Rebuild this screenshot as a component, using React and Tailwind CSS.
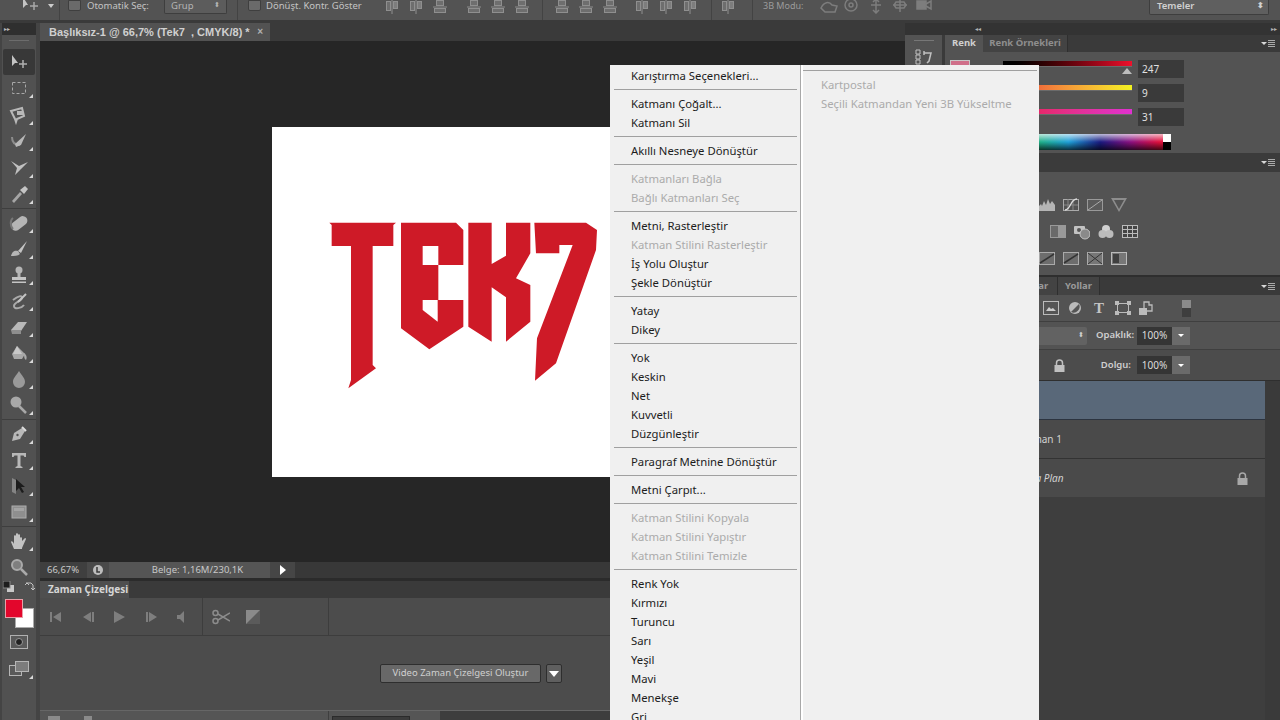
import { Fragment } from "react";

const MENU = [
  [["Karıştırma Seçenekleri..."]],
  [["Katmanı Çoğalt..."], ["Katmanı Sil"]],
  [["Akıllı Nesneye Dönüştür"]],
  [["Katmanları Bağla", true], ["Bağlı Katmanları Seç", true]],
  [["Metni, Rasterleştir"], ["Katman Stilini Rasterleştir", true], ["İş Yolu Oluştur"], ["Şekle Dönüştür"]],
  [["Yatay"], ["Dikey"]],
  [["Yok"], ["Keskin"], ["Net"], ["Kuvvetli"], ["Düzgünleştir"]],
  [["Paragraf Metnine Dönüştür"]],
  [["Metni Çarpıt..."]],
  [["Katman Stilini Kopyala", true], ["Katman Stilini Yapıştır", true], ["Katman Stilini Temizle", true]],
  [["Renk Yok"], ["Kırmızı"], ["Turuncu"], ["Sarı"], ["Yeşil"], ["Mavi"], ["Menekşe"], ["Gri"]],
];

// tool glyphs, drawn on a 20x20 box
const TOOL_GROUPS = [
  [
    <><path d="M3 3v11l3-3 3 0z" fill="#c4c4c4" /><path d="M14 8v8M10 12h8" stroke="#b0b0b0" strokeWidth="1.5" /></>,
    <rect x="3.5" y="4.5" width="13" height="11" fill="none" stroke="#a8a8a8" strokeDasharray="3 2" />,
    <><path d="M2 6l11-3 2 8-7 3-1 3-1-3z" fill="none" stroke="#b8b8b8" strokeWidth="2" /><rect x="8" y="6" width="6" height="4" fill="#b8b8b8" /></>,
    <><path d="M3 6c0 6 3 8 8 8" fill="none" stroke="#8c8c8c" strokeWidth="2" /><path d="M6 13l11-10-5 11-5 2z" fill="#b8b8b8" /></>,
    <><path d="M2 3l8 5 9-4-7 7-6 6 2-7z" fill="#c0c0c0" /></>,
    <><path d="M3 17l8-9 2 2-8 9z" fill="#a5a5a5" /><path d="M11 6l5-4 3 3-4 5z" fill="#c4c4c4" /></>,
  ],
  [
    <><rect x="1" y="6" width="18" height="9" rx="4.5" transform="rotate(-38 10 10)" fill="#b5b5b5" /><path d="M4 5c-3 2-3 8 0 11" fill="none" stroke="#777" strokeWidth="2" /></>,
    <><path d="M9 12L18 2l-6 12z" fill="#c4c4c4" /><path d="M2 17c1-5 4-6 7-5l2 3c-2 2-6 2-9 2z" fill="#b5b5b5" /></>,
    <><circle cx="10" cy="5" r="3.5" fill="#b5b5b5" /><rect x="8.5" y="7" width="3" height="5" fill="#b5b5b5" /><rect x="3" y="12" width="14" height="3" fill="#c4c4c4" /><rect x="3" y="16.5" width="14" height="1.5" fill="#c4c4c4" /></>,
    <><path d="M4 9c5-4 9-5 9-2s-8 4-8 8 8 2 10-1" fill="none" stroke="#aaa" strokeWidth="2" /><path d="M9 11l8-8" stroke="#c4c4c4" strokeWidth="2" /></>,
    <><path d="M2 13L9 5h9l-6 9H3z" fill="#b8b8b8" /><path d="M2 13h10v4H3z" fill="#8e8e8e" /></>,
    <><path d="M8 3l8 8-3 5H5l-2-5z" fill="#a8a8a8" /><path d="M8 3l-4 8h9z" fill="#c8c8c8" /><path d="M15 10c3 2 3 5 2 7-2-1-2-4-2-7z" fill="#aaa" /></>,
    <path d="M10 2c3 5 6 7 6 11a6 6 0 0 1-12 0c0-4 3-6 6-11z" fill="#9a9a9a" />,
    <><circle cx="7" cy="7" r="5.5" fill="#a8a8a8" /><path d="M10 11l7 7" stroke="#a8a8a8" strokeWidth="2.5" /></>,
  ],
  [
    <><path d="M3 17l2-8 8-5 3 3-5 8z" fill="#b8b8b8" /><path d="M13 3l4 4" stroke="#ddd" strokeWidth="2" /><circle cx="8.5" cy="11" r="1.2" fill="#555" /></>,
    <path d="M3 3h14v4h-1.5l-1-1.5H11.5V16l2 1v1h-7v-1l2-1V5.5H5.500l-1 1.500H3z" fill="#b8b8b8" />,
    <><path d="M3 2v14l4 2V4z" fill="#858585" /><path d="M7 3v12l3-3 3 5 2-1-3-5h4z" fill="#1c1c1c" /></>,
    <><rect x="3" y="4" width="14" height="12" fill="#8f8f8f" stroke="#adadad" /><rect x="5" y="6" width="10" height="3" fill="#a4a4a4" /></>,
  ],
  [
    <path d="M5 18l-3-7c0-1 1-1 2 0l1 2V5c0-1 2-1 2 0v4-6c0-1 2-1 2 0v6-5c0-1 2-1 2 0v6-3c0-1 2-1 2 0v3l3-3c1 0 1 1 1 1l-4 9v1z" fill="#c2c2c2" />,
    <><circle cx="8" cy="8" r="5" fill="#7f7f7f" stroke="#aaa" strokeWidth="2" /><path d="M12 12l6 6" stroke="#aaa" strokeWidth="2.500" /></>,
  ],
];

function Tool({ children, active, corner = true }) {
  return (
    <div className={`relative flex h-[26px] items-center justify-center ${active ? "mx-[1px] rounded-[2px] bg-[#383838]" : ""}`}>
      <svg width="20" height="20" viewBox="0 0 20 20">{children}</svg>
      {corner && <span className="absolute bottom-[3px] right-[3px] h-0 w-0 border-b-[4px] border-l-[4px] border-b-[#d8d8d8] border-l-transparent" />}
    </div>
  );
}

function Toolbar() {
  return (
    <div className="flex w-[40px] shrink-0 bg-[#444444]">
      <div className="ml-[2px] flex w-[34px] flex-col bg-[#515151]">
        <div className="flex h-[12px] items-center bg-[#2f2f2f] pl-[2px] text-[6px] leading-none text-[#bbbbbb]">▸▸</div>
        <div className="flex h-[14px] items-start justify-center pt-[5px]">
          <span className="h-[1px] w-[20px] bg-[#6c6c6c]" />
        </div>
        <div className="flex flex-col gap-[0.4px]">
          {TOOL_GROUPS[0].map((g, i) => <Tool key={i} active={i === 0} corner={i !== 0}>{g}</Tool>)}
        </div>
        <div className="my-[1px] h-[1px] bg-[#3e3e3e]" />
        {TOOL_GROUPS[1].map((g, i) => <Tool key={i}>{g}</Tool>)}
        <div className="my-[1px] h-[1px] bg-[#3e3e3e]" />
        {TOOL_GROUPS[2].map((g, i) => <Tool key={i}>{g}</Tool>)}
        <div className="my-[1px] h-[1px] bg-[#3e3e3e]" />
        {TOOL_GROUPS[3].map((g, i) => <Tool key={i} corner={i === 0}>{g}</Tool>)}

        {/* swatches */}
        <div className="flex h-[14px] items-center justify-between px-[1px]">
          <svg width="11" height="11" viewBox="0 0 11 11"><rect x="4" y="4" width="7" height="7" fill="#c8c8c8" /><rect x="0" y="0" width="7" height="7" fill="#1d1d1d" stroke="#888" /></svg>
          <svg width="11" height="11" viewBox="0 0 11 11"><path d="M2 2h5l2 2v5M1 4l2-2 2 2M7 7l2 2 2-2" fill="none" stroke="#c4c4c4" /></svg>
        </div>
        <div className="h-[35px] pl-[3px] pt-[5px]">
          <div className="relative h-[29px] w-[29px]">
            <div className="absolute bottom-0 right-0 h-[20px] w-[19px] border border-[#aaaaaa] bg-white" />
            <div className="absolute left-0 top-0 h-[19px] w-[18px] border border-[#e8a0a8] bg-[#e3062c]" />
          </div>
        </div>
        <div className="flex h-[26px] items-center justify-center">
          <svg width="18" height="14" viewBox="0 0 18 14"><rect x="0.500" y="0.500" width="17" height="13" fill="#5a5a5a" stroke="#b0b0b0" /><circle cx="9" cy="7" r="3.500" fill="#222" stroke="#999" /></svg>
        </div>
        <div className="relative mt-[1px] flex h-[26px] items-center justify-center">
          <svg width="20" height="16" viewBox="0 0 20 16"><rect x="0.500" y="4.500" width="12" height="10" fill="#5a5a5a" stroke="#b5b5b5" /><rect x="6.500" y="0.500" width="13" height="10" fill="#7c7c7c" stroke="#b5b5b5" /></svg>
          <span className="absolute bottom-[3px] right-[3px] h-0 w-0 border-b-[4px] border-l-[4px] border-b-[#d8d8d8] border-l-transparent" />
        </div>
      </div>
    </div>
  );
}

function Align({ horizontal }) {
  return (
    <svg width="16" height="14" viewBox="0 0 16 14" className="shrink-0">
      {horizontal ? (
        <><path d="M1 7h14" stroke="#8f8f8f" /><rect x="4.500" y="0.500" width="7" height="5" fill="#6e6e6e" stroke="#8f8f8f" /><rect x="2.500" y="8.500" width="11" height="4" fill="#6e6e6e" stroke="#8f8f8f" /></>
      ) : (
        <><path d="M8 0v14" stroke="#8f8f8f" /><rect x="2.500" y="1.500" width="4" height="9" fill="#6e6e6e" stroke="#8f8f8f" /><rect x="9.500" y="1.500" width="4" height="7" fill="#7d7d7d" stroke="#8f8f8f" /></>
      )}
    </svg>
  );
}

function TopDivider({ className }) {
  return <span className={`h-[20px] w-[1px] shrink-0 bg-[#434343] ${className}`} />;
}

function TopBar() {
  return (
    <div className="flex h-[20px] items-start overflow-hidden bg-[#535353] text-[9.5px] leading-[11px] text-[#c4c4c4]">
      <svg width="18" height="12" viewBox="0 0 18 12" className="ml-[22px] shrink-0"><path d="M1 -3v11l3-3 2 0z" fill="#c4c4c4" /><path d="M12 2v8M8 6h8" stroke="#a8a8a8" strokeWidth="1.500" /></svg>
      <span className="ml-[8px] mt-[4px] h-0 w-0 shrink-0 border-x-[3px] border-t-[4px] border-x-transparent border-t-[#cccccc]" />
      <TopDivider className="ml-[5px]" />
      <span className="ml-[8px] h-[11px] w-[13px] shrink-0 rounded-b-[2px] border border-[#3f3f3f] bg-[#6a6a6a]" />
      <span className="ml-[6px] w-[70px] shrink-0 whitespace-nowrap">Otomatik Seç:</span>
      <div className="ml-[7px] flex h-[14px] w-[63px] shrink-0 items-start justify-between rounded-b-[2px] border-x border-b border-[#3e3e3e] bg-[#5c5c5c] px-[6px] text-[#b5b5b5]">
        <span>Grup</span>
        <span className="text-[7px] leading-[10px]">⬍</span>
      </div>
      <TopDivider className="ml-[10px]" />
      <span className="ml-[10px] h-[11px] w-[13px] shrink-0 rounded-b-[2px] border border-[#3f3f3f] bg-[#6a6a6a]" />
      <span className="ml-[5px] w-[118px] shrink-0 whitespace-nowrap">Dönüşt. Kontr. Göster</span>
      <div className="flex shrink-0 gap-[8px]"><Align /><Align /><Align horizontal /></div>
      <div className="ml-[18px] flex shrink-0 gap-[8px]"><Align horizontal /><Align horizontal /><Align horizontal /></div>
      <TopDivider className="ml-[12px]" />
      <div className="ml-[11px] flex shrink-0 gap-[8px]"><Align horizontal /><Align horizontal /><Align horizontal /></div>
      <div className="ml-[16px] flex shrink-0 gap-[8px]"><Align /><Align /><Align /></div>
      <TopDivider className="ml-[13px]" />
      <div className="ml-[8px] shrink-0"><Align /></div>
      <TopDivider className="ml-[16px]" />
      <span className="ml-[10px] w-[57px] shrink-0 whitespace-nowrap text-[9px] text-[#9c9c9c]">3B Modu:</span>
      <svg width="112" height="14" viewBox="0 0 112 14" fill="none" stroke="#7d7d7d" strokeWidth="1.500" className="shrink-0">
        <path d="M1 8c3-6 8-7 11-3l5 1-2 6H5z" />
        <circle cx="31" cy="5" r="6" /><circle cx="31" cy="5" r="2" />
        <path d="M56 0v12M51 5h10M53 2l3-3 3 3M53 10l3 3 3-3" />
        <path d="M73 5h14M80 0v12M76 2h8l2 3-2 3h-8l-2-3z" />
        <rect x="97" y="1" width="9" height="8" fill="#7d7d7d" /><path d="M106 4l5-3v8l-5-3" />
      </svg>
      <div className="ml-[217px] flex h-[15px] w-[120px] shrink-0 items-start justify-between rounded-b-[2px] border-x border-b border-[#3e3e3e] bg-[#5f5f5f] pl-[7px] pr-[4px] font-semibold text-[#d0d0d0]">
        <span>Temeler</span>
        <span className="text-[8px] leading-[10px]">⬍</span>
      </div>
    </div>
  );
}

function Logo() {
  return (
    <svg width="290" height="190" viewBox="0 0 870 570" aria-label="Tek7 logo" fill="#ce1a27">
      <polygon points="25,38 225,38 217,45 217,108 155,108 155,465 165,475 82,535 90,510 90,108 32,108 32,45" />
      <polygon points="240,38 405,38 427,60 427,165 352,165 352,270 427,270 427,350 325,418 240,355" />
      <rect x="305" y="108" width="47" height="57" fill="#ffffff" />
      <polygon points="305,270 350,270 350,335 305,300" fill="#ffffff" />
      <polygon points="442,38 512,38 512,162 555,137 555,38 628,38 628,130 585,205 628,225 628,335 555,395 555,262 512,232 512,395 442,350" />
      <polygon points="640,38 795,38 828,60 825,120 705,460 642,512 648,385 755,105 715,105 715,130 645,130" />
    </svg>
  );
}

function Timeline() {
  return (
    <div className="flex h-[139px] flex-col bg-[#4c4c4c]">
      <div className="flex h-[17px] shrink-0 bg-[#3a3a3a]">
        <div className="flex w-[89px] items-center whitespace-nowrap bg-[#4f4f4f] pl-[8px] text-[10px] font-bold text-[#d6d6d6]">Zaman Çizelgesi</div>
      </div>
      <div className="flex h-[38px] shrink-0 border-b border-[#3d3d3d]">
        <div className="flex w-[163px] items-center border-r border-[#3d3d3d] pl-[9px]">
          <svg width="140" height="14" viewBox="0 0 140 14" fill="#7e7e7e">
            <path d="M1 2h2v10H1zM12 2v10L4 7z" />
            <path d="M34 7l8-5v10zM43 2h2v10h-2z" />
            <path d="M65 1l11 6-11 6z" />
            <path d="M97 2h2v10h-2zM100 2l8 5-8 5z" />
            <path d="M128 5h3l4-4v12l-4-4h-3z" />
          </svg>
        </div>
        <div className="flex w-[126px] items-center gap-[16px] border-r border-[#3d3d3d] pl-[9px]">
          <svg width="18" height="16" viewBox="0 0 18 16" fill="none" stroke="#8c8c8c" strokeWidth="1.500"><circle cx="3.500" cy="4" r="2.500" /><circle cx="3.500" cy="12" r="2.500" /><path d="M6 5l12 7M6 11l12-7" /></svg>
          <svg width="14" height="14" viewBox="0 0 14 14"><rect width="14" height="14" fill="#8a8a8a" /><path d="M14 0v14H0z" fill="#5b5b5b" /></svg>
        </div>
      </div>
      <div className="flex flex-1 items-start pl-[340px] pt-[28px]">
        <button className="flex h-[19px] w-[161px] items-center justify-center rounded-[2px] border border-[#2e2e2e] bg-[#686868] text-[9.5px] text-[#d0d0d0]">Video Zaman Çizelgesi Oluştur</button>
        <button className="ml-[5px] flex h-[19px] w-[16px] items-center justify-center rounded-[2px] border border-[#2e2e2e] bg-[#5f5f5f]">
          <span className="h-0 w-0 border-x-[5px] border-t-[6px] border-x-transparent border-t-white" />
        </button>
      </div>
      <div className="flex h-[10px] shrink-0 border-t border-[#666666]">
        <div className="flex w-[400px] bg-[#555555]">
          <div className="flex w-[289px] items-start gap-[24px] border-r border-[#3f3f3f] pl-[8px] pt-[5px]">
            <span className="h-[4px] w-[12px] bg-[#8a8a8a]" />
            <span className="h-[4px] w-[8px] bg-[#8a8a8a]" />
          </div>
          <span className="ml-[3px] mt-[5px] h-[5px] w-[78px] border border-[#2b2b2b] bg-[#3c3c3c]" />
        </div>
        <div className="flex-1 bg-[#3d3d3d]" />
      </div>
    </div>
  );
}

function DocArea() {
  return (
    <div className="flex min-w-0 flex-1 flex-col bg-[#262626]">
      <div className="flex h-[18px] shrink-0 bg-[#3a3a3a]">
        <div className="flex w-[230px] items-center justify-between bg-[#525252] pl-[9px] pr-[7px] font-['Liberation_Sans',sans-serif] text-[11px] font-bold text-[#d0d0d0]">
          <span className="whitespace-pre">Başlıksız-1 @ 66,7% (Tek7  , CMYK/8) *</span>
          <span className="text-[10px] leading-none text-[#b0b0b0]">×</span>
        </div>
      </div>
      <div className="flex flex-1 items-center justify-center">
        <div className="h-[350px] w-[402px] shrink-0 bg-white pl-[49px] pt-[83px]">
          <Logo />
        </div>
      </div>
      <div className="flex h-[16px] shrink-0 bg-[#383838] text-[9.5px] text-[#c8c8c8]">
        <span className="flex w-[47px] items-center bg-[#3f3f3f] pl-[7px]">66,67%</span>
        <span className="flex w-[22px] items-center justify-center bg-[#4a4a4a]">
          <svg width="10" height="10" viewBox="0 0 10 10"><circle cx="5" cy="5" r="5" fill="#bdbdbd" /><path d="M4 2v5h3" fill="none" stroke="#3a3a3a" strokeWidth="1.500" /></svg>
        </span>
        <span className="flex w-[161px] items-center justify-center bg-[#555555] pl-[16px]">Belge: 1,16M/230,1K</span>
        <span className="flex w-[25px] items-center justify-center bg-[#464646]">
          <span className="h-0 w-0 border-y-[5px] border-l-[6px] border-y-transparent border-l-white" />
        </span>
      </div>
      <div className="h-[3px] shrink-0 bg-[#2b2b2b]" />
      <Timeline />
    </div>
  );
}

function PanelMenu() {
  return (
    <span className="flex items-center gap-[1px]">
      <span className="h-0 w-0 border-x-[3px] border-t-[3px] border-x-transparent border-t-[#d8d8d8]" />
      <span className="flex h-[7px] w-[7px] flex-col justify-between">
        <span className="h-[1px] bg-[#aaaaaa]" /><span className="h-[1px] bg-[#aaaaaa]" /><span className="h-[1px] bg-[#aaaaaa]" /><span className="h-[1px] bg-[#aaaaaa]" />
      </span>
    </span>
  );
}

function ColorRow({ bar, value, marker }) {
  return (
    <div className="flex h-[18px] items-start">
      <div className="relative h-[18px] w-[129px]">
        <div className={`mt-[1px] h-[6px] w-full border-b border-[#6b6b6b] ${bar}`} />
        {marker && <span className="absolute right-0 top-[8px] h-0 w-0 border-x-[5px] border-b-[6px] border-x-transparent border-b-[#bdbdbd]" />}
      </div>
      <div className="ml-[6px] flex h-[18px] w-[46px] items-center bg-[#3a3a3a] pl-[4px] text-[10px] text-[#e0e0e0]">{value}</div>
    </div>
  );
}

const GLYPH = {
  hist: <path d="M0 14V9l2-2 1 2 2-5 2 4 2-6 2 5 2-3 3 4v6z" fill="#b5b5b5" />,
  curve: <><rect x="0.500" y="2.500" width="15" height="11" fill="none" stroke="#aaa" /><path d="M1 8h14M5 2v11M10 2v11" stroke="#888" /><path d="M2 13c6 0 5-11 12-11" fill="none" stroke="#ddd" strokeWidth="1.300" /></>,
  expo: <><rect x="0.500" y="2.500" width="15" height="11" fill="#5b5b5b" stroke="#999" /><path d="M1 13L15 3" stroke="#aaa" /></>,
  tri: <path d="M0 1h16l-8 14zM3 3l5 9 5-9z" fill="#8d8d8d" fillRule="evenodd" />,
  half: <><rect x="0.500" y="1.500" width="15" height="12" fill="#6a6a6a" stroke="#999" /><rect x="8" y="2" width="7" height="11" fill="#999" /></>,
  photo: <><rect x="0" y="2" width="11" height="8" rx="1" fill="#c2c2c2" /><circle cx="5" cy="6" r="2" fill="#555" /><circle cx="11" cy="10" r="5" fill="#8a8a8a" stroke="#c2c2c2" /></>,
  mix: <><circle cx="8" cy="5" r="4" fill="#d0d0d0" /><circle cx="4.500" cy="10" r="4" fill="#bcbcbc" /><circle cx="11.500" cy="10" r="4" fill="#bcbcbc" /></>,
  grid: <><rect x="0.500" y="1.500" width="15" height="12" fill="#444" stroke="#bbb" /><path d="M1 5.500h14M1 9.500h14M5.500 2v11M10.500 2v11" stroke="#bbb" /></>,
  wave: <><rect x="0.500" y="1.500" width="15" height="12" fill="#6d6d6d" stroke="#aaa" /><path d="M1 12l14-9" stroke="#333" strokeWidth="1.500" /></>,
  cross: <><rect x="0.500" y="1.500" width="15" height="12" fill="#777" stroke="#aaa" /><path d="M1 2l7 5.500L15 2M1 13l7-5.500L15 13" fill="none" stroke="#333" /></>,
  grad: <><rect x="0.500" y="1.500" width="15" height="12" fill="#777" stroke="#bbb" /><rect x="2" y="3" width="6" height="9" fill="#3f3f3f" /></>,
};

function Glyphs({ list }) {
  return list.map((k, i) => (
    <svg key={i} width="16" height="16" viewBox="0 0 16 16" className="shrink-0">{GLYPH[k]}</svg>
  ));
}

function Lock({ color = "#c0c0c0" }) {
  return (
    <svg width="11" height="13" viewBox="0 0 11 13"><path d="M2.500 6V4a3 3 0 0 1 6 0v2" fill="none" stroke={color} strokeWidth="1.500" /><rect x="0.500" y="6" width="10" height="7" fill={color} /></svg>
  );
}

function Percent({ label, labelClass }) {
  return (
    <div className={`flex items-center ${labelClass}`}>
      <span className="mr-[6px] w-[35px] whitespace-nowrap text-right text-[9.5px] font-semibold text-[#cfcfcf]">{label}</span>
      <span className="flex h-[18px] w-[35px] items-center justify-center bg-[#353535] text-[10px] text-[#dcdcdc]">100%</span>
      <span className="flex h-[18px] w-[18px] items-center justify-center bg-[#6a6a6a]">
        <span className="h-0 w-0 border-x-[3px] border-t-[3px] border-x-transparent border-t-white" />
      </span>
    </div>
  );
}

function Dock() {
  return (
    <div className="flex w-[375px] shrink-0 flex-col bg-[#3a3a3a]">
      <div className="flex h-[12px] shrink-0 items-center justify-between bg-[#333333] pl-[70px] pr-[3px] text-[6px] leading-none text-[#b5b5b5]">
        <span>◂◂</span>
        <span>▸▸</span>
      </div>
      <div className="flex min-h-0 flex-1">
        <div className="flex h-[60px] w-[37px] shrink-0 flex-col items-center bg-[#535353]">
          <span className="mt-[5px] h-[1px] w-[20px] bg-[#777777]" />
          <svg width="18" height="16" viewBox="0 0 18 16" className="mt-[8px]"><path d="M1 1h4v4H1zM1 6h4v4H1zM1 11h4v4H1z" fill="none" stroke="#c0c0c0" /><path d="M9 4h7l-2 8-2 2M9 2v4" fill="none" stroke="#c0c0c0" strokeWidth="1.500" /></svg>
        </div>
        <div className="ml-[3px] flex min-w-0 flex-1 flex-col">
          {/* color panel */}
          <div className="flex h-[17px] shrink-0 bg-[#3a3a3a] text-[9.5px] font-bold">
            <span className="flex w-[38px] items-center justify-center bg-[#535353] text-[#cfcfcf]">Renk</span>
            <span className="flex w-[85px] items-center justify-center border-r border-[#2f2f2f] bg-[#434343] text-[#8e8e8e]">Renk Örnekleri</span>
            <span className="ml-auto flex items-center pr-[5px]"><PanelMenu /></span>
          </div>
          <div className="flex h-[101px] shrink-0 bg-[#535353] pt-[8px]">
            <div className="ml-[5px] h-[20px] w-[20px] border border-[#c8c8c8] bg-[#d0708a]" />
            <div className="ml-[33px] flex flex-col">
              <div className="flex flex-col gap-[6px]">
                <ColorRow bar="bg-gradient-to-r from-[#000000] to-[#f0102c]" value="247" marker />
                <ColorRow bar="bg-gradient-to-r from-[#e5203a] to-[#f2f220]" value="9" />
                <ColorRow bar="bg-gradient-to-r from-[#e8103a] to-[#e030d0]" value="31" />
              </div>
              <div className="relative mt-[8px] h-[16px] w-[168px] bg-[linear-gradient(90deg,#e8d820,#20b088_22%,#1fa0d8_39%,#1a1a80_58%,#8a1080_76%,#e0103c_93%)]">
                <span className="absolute inset-0 bg-gradient-to-b from-white/70 via-transparent to-black/70" />
                <span className="absolute right-0 top-0 h-[8px] w-[8px] bg-white" />
                <span className="absolute bottom-0 right-0 h-[8px] w-[8px] bg-black" />
              </div>
            </div>
          </div>

          {/* adjustments */}
          <div className="flex h-[19px] shrink-0 items-center justify-end bg-[#3b3b3b] pr-[5px]"><PanelMenu /></div>
          <div className="flex h-[103px] shrink-0 flex-col gap-[11px] bg-[#535353] pt-[25px]">
            <div className="flex gap-[8px] pl-[94px]"><Glyphs list={["hist", "curve", "expo", "tri"]} /></div>
            <div className="flex gap-[8px] pl-[105px]"><Glyphs list={["half", "photo", "mix", "grid"]} /></div>
            <div className="flex gap-[8px] pl-[94px]"><Glyphs list={["wave", "wave", "cross", "grad"]} /></div>
          </div>
          <div className="h-[2px] shrink-0 bg-[#2e2e2e]" />

          {/* layers */}
          <div className="flex h-[18px] shrink-0 bg-[#3a3a3a] text-[9.5px] font-bold text-[#9a9a9a]">
            <span className="flex w-[55px] items-center justify-center bg-[#535353] text-[#cfcfcf]">Katmanlar</span>
            <span className="flex w-[58px] items-center justify-center border-r border-[#2f2f2f] bg-[#434343]">Kanallar</span>
            <span className="flex w-[42px] items-center justify-center border-r border-[#2f2f2f] bg-[#434343]">Yollar</span>
            <span className="ml-auto flex items-center pr-[5px]"><PanelMenu /></span>
          </div>
          <div className="flex h-[27px] shrink-0 items-center gap-[8px] border-b border-[#3f3f3f] bg-[#535353] pl-[98px]">
            <svg width="16" height="14" viewBox="0 0 16 14"><rect x="0.500" y="0.500" width="15" height="13" fill="#555" stroke="#bbb" /><path d="M3 10l3-4 2 2 2-1 3 3z" fill="#ccc" /></svg>
            <svg width="16" height="16" viewBox="0 0 16 16"><circle cx="8" cy="8" r="6" fill="#bbb" /><path d="M12 4L4 12A6 6 0 0 0 12 4z" fill="#555" /></svg>
            <span className="w-[16px] text-center font-['Liberation_Serif',serif] text-[15px] font-bold leading-none text-[#c4c4c4]">T</span>
            <svg width="16" height="14" viewBox="0 0 16 14" fill="none" stroke="#bbb"><rect x="2.500" y="2.500" width="11" height="9" /><rect x="0.500" y="0.500" width="3" height="3" fill="#bbb" /><rect x="12.500" y="0.500" width="3" height="3" fill="#bbb" /><rect x="0.500" y="10.500" width="3" height="3" fill="#bbb" /><rect x="12.500" y="10.500" width="3" height="3" fill="#bbb" /></svg>
            <svg width="14" height="14" viewBox="0 0 14 14"><rect x="0" y="7" width="8" height="7" fill="#bbb" /><path d="M5 7V1h5v3h3v6H8" fill="none" stroke="#bbb" strokeWidth="1.300" /></svg>
            <span className="ml-[21px] flex h-[17px] w-[9px] flex-col">
              <span className="h-1/2 bg-[#8a8a8a]" />
              <span className="h-1/2 bg-[#3e3e3e]" />
            </span>
          </div>
          <div className="flex h-[28px] shrink-0 items-center border-b border-[#3f3f3f] bg-[#535353]">
            <div className="flex h-[18px] w-[142px] shrink-0 items-center justify-end rounded-[2px] bg-[#626262] pr-[3px] text-[7px] text-[#d0d0d0]">⬍</div>
            <Percent label="Opaklık:" labelClass="ml-[9px]" />
          </div>
          <div className="flex h-[31px] shrink-0 items-center border-b border-[#2f2f2f] bg-[#4c4c4c] pl-[109px]">
            <Lock />
            <Percent label="Dolgu:" labelClass="ml-[31px]" />
          </div>
          <div className="flex min-h-0 flex-1">
            <div className="flex w-[320px] shrink-0 flex-col bg-[#3e3e3e] text-[10px] text-[#d2d2d2]">
              <div className="flex h-[39px] items-center border-b border-[#2c3440] bg-[#596879] pl-[72px] text-[#cfd4da]">Tek7</div>
              <div className="flex h-[39px] items-center border-b border-[#333333] bg-[#4a4a4a] pl-[72px]">Katman 1</div>
              <div className="flex h-[38px] items-center justify-between bg-[#4a4a4a] pl-[76px] pr-[17px] italic">
                <span>Arka Plan</span>
                <Lock color="#a8a8a8" />
              </div>
            </div>
            <div className="flex-1 bg-[#3a3a3a]" />
          </div>
        </div>
      </div>
    </div>
  );
}

function ContextMenu() {
  return (
    <div className="absolute left-[610px] top-[65px] flex h-[655px] w-[429px] overflow-hidden bg-[#f0f0f0] font-['Noto_Sans',sans-serif] text-[11.3px] leading-[19px]">
      <div className="w-[190px] shrink-0 pl-[4px] pt-[1px]">
        {MENU.map((group, i) => (
          <Fragment key={i}>
            {i > 0 && (
              <div className="flex h-[9px] items-center">
                <span className="h-[1px] w-[183px] bg-[#a0a0a0]" />
              </div>
            )}
            {group.map(([label, off]) => (
              <div key={label} className={`h-[19px] whitespace-nowrap pl-[17px] ${off ? "text-[#ababab]" : "text-[#1c1c1c]"}`}>{label}</div>
            ))}
          </Fragment>
        ))}
      </div>
      <div className="w-[1px] shrink-0 bg-[#a8a8a8]" />
      <div className="w-[2px] shrink-0 bg-white" />
      <div className="min-w-0 flex-1 pr-[2px] pt-[5px]">
        <div className="h-[1px] bg-[#a0a0a0]" />
        <div className="pl-[18px] pt-[4px] text-[#ababab]">
          <div className="h-[19px] whitespace-nowrap">Kartpostal</div>
          <div className="h-[19px] whitespace-nowrap">Seçili Katmandan Yeni 3B Yükseltme</div>
        </div>
      </div>
    </div>
  );
}

export default function App() {
  return (
    <div className="relative flex h-[720px] w-[1280px] flex-col overflow-hidden bg-[#3a3a3a] font-['Noto_Sans',sans-serif]">
      <TopBar />
      <div className="h-[3px] shrink-0 bg-[#3a3a3a]" />
      <div className="flex min-h-0 flex-1">
        <Toolbar />
        <DocArea />
        <Dock />
      </div>
      <ContextMenu />
    </div>
  );
}
